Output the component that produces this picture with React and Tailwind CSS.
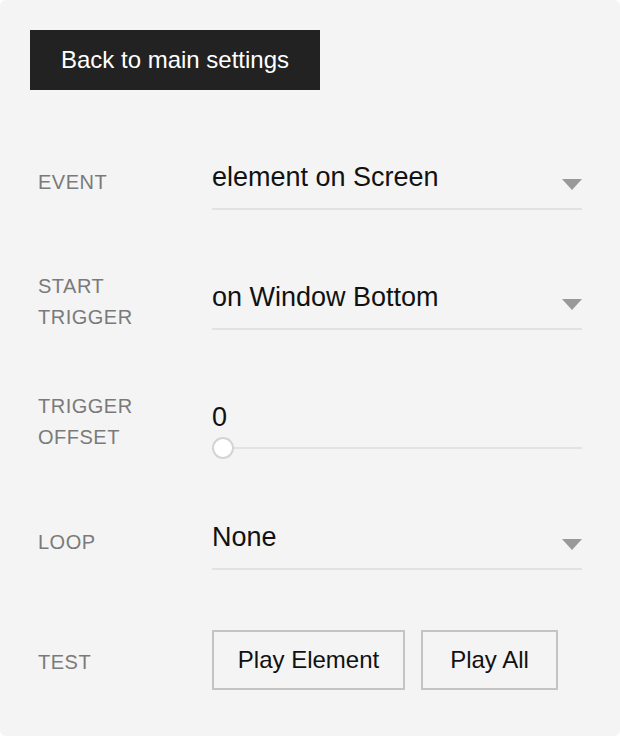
import React, { useState } from 'react';

const font = { fontFamily: '"Liberation Sans", Arial, sans-serif' };

const Arrow = () => (
  <svg width="20" height="11" viewBox="0 0 20 11" className="mt-[14px] shrink-0">
    <polygon points="0,0 20,0 10,11" fill="#999999" />
  </svg>
);

const Label = ({ children }) => (
  <div className="w-[182px] shrink-0 pl-[8px] pt-[4px] text-[20px] leading-[31px] tracking-[0.5px] text-[#7a7a7a] uppercase">
    {children}
  </div>
);

const SelectField = ({ value }) => (
  <div className="w-[370px] h-[60px] flex items-center justify-between border-b-2 border-[#e2e2e2] pb-[4px]">
    <span className="text-[27px] text-[#111]">{value}</span>
    <Arrow />
  </div>
);

const Row = ({ label, children }) => (
  <div className="flex items-center h-[60px]">
    <Label>{label}</Label>
    {children}
  </div>
);

export default function App() {
  const [offset] = useState(0);

  return (
    <div className="w-[620px] h-[736px] bg-white" style={font}>
      <div className="w-full h-full bg-[#f4f4f4] rounded-[6px] px-[30px] pt-[30px]">
        <button className="w-[290px] h-[60px] bg-[#222222] text-white text-[24px] flex items-center justify-center">
          Back to main settings
        </button>

        <div className="mt-[60px] flex flex-col gap-[60px]">
          <Row label="Event">
            <SelectField value="element on Screen" />
          </Row>

          <Row label={<>Start<br />Trigger</>}>
            <SelectField value="on Window Bottom" />
          </Row>

          <Row label={<>Trigger<br />Offset</>}>
            <div className="w-[370px] h-[60px] pt-[12px]">
              <div className="text-[27px] leading-[30px] text-[#111]">{offset}</div>
              <div className="relative mt-[15px] h-[2px] bg-[#e2e2e2]">
                <div className="absolute left-0 top-1/2 -translate-y-1/2 w-[22px] h-[22px] rounded-full bg-white border-2 border-[#d4d4d4]" />
              </div>
            </div>
          </Row>

          <Row label="Loop">
            <SelectField value="None" />
          </Row>

          <Row label="Test">
            <div className="flex gap-[16px]">
              <button className="w-[193px] h-[60px] border-2 border-[#c4c4c4] text-[24px] text-[#111] flex items-center justify-center">
                Play Element
              </button>
              <button className="w-[137px] h-[60px] border-2 border-[#c4c4c4] text-[24px] text-[#111] flex items-center justify-center">
                Play All
              </button>
            </div>
          </Row>
        </div>
      </div>
    </div>
  );
}
